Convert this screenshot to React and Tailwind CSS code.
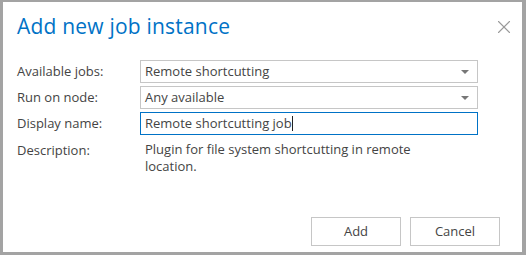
import { X } from 'lucide-react'

function SelectBox({ value }) {
  return (
    <div className="h-[23px] border border-[#c6c6c6] bg-white flex items-center justify-between pl-[4px] pr-[8px]">
      <span>{value}</span>
      <span className="w-0 h-0 border-l-[4px] border-r-[4px] border-t-[4px] border-l-transparent border-r-transparent border-t-[#777]"></span>
    </div>
  )
}

export default function App() {
  return (
    <div className="w-[526px] h-[255px] bg-[#a3a3a3] pl-[3px] pt-[2px] pr-[4px] pb-[3px] overflow-hidden" style={{ fontFamily: '"Open Sans", "Noto Sans", sans-serif' }}>
      <div className="w-full h-full bg-white flex flex-col text-[13px] text-[#444]">
        <div className="flex items-start justify-between pl-[14px] pr-[7px] pt-[9px]">
          <h1 className="text-[21px] leading-[30px] text-[#0072c6] font-normal tracking-[0.2px]">Add new job instance</h1>
          <X className="mt-[5px] text-[#9a9a9a]" size={22} strokeWidth={1.2} />
        </div>
        <div className="grid grid-cols-[123px_338px] gap-y-[3px] pl-[14px] mt-[19px] items-center">
          <div>Available jobs:</div>
          <SelectBox value="Remote shortcutting" />
          <div>Run on node:</div>
          <SelectBox value="Any available" />
          <div>Display name:</div>
          <div className="h-[23px] border border-[#0072c6] flex items-center pl-[4px]">
            <span>Remote shortcutting job</span>
            <span className="w-px h-[15px] bg-[#222]"></span>
          </div>
          <div className="self-start mt-[3px]">Description:</div>
          <div className="pl-[5px] pr-[60px] mt-[3px] leading-[17px]">Plugin for file system shortcutting in remote location.</div>
        </div>
        <div className="mt-auto flex justify-end gap-[9px] pr-[22px] pb-[6px]">
          <button className="w-[90px] h-[29px] border border-[#c6c6c6] bg-white text-[#444]">Add</button>
          <button className="w-[90px] h-[29px] border border-[#c6c6c6] bg-white text-[#444]">Cancel</button>
        </div>
      </div>
    </div>
  )
}
